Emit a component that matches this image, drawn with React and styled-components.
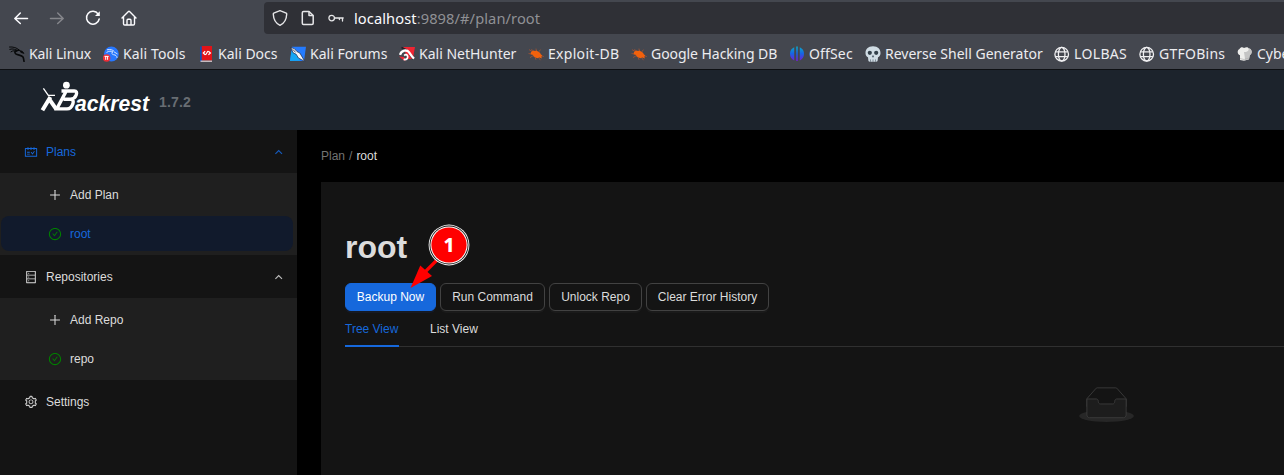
import React from "react";
import styled, { createGlobalStyle } from "styled-components";
import {
    AiOutlineCheckCircle,
    AiOutlineDatabase,
    AiOutlinePlus,
    AiOutlineSchedule,
    AiOutlineSetting,
} from "react-icons/ai";

const bookmarks = [
    { name: "Kali Linux", icon: DragonIcon, width: 94, spacing: -0.1 },
    { name: "Kali Tools", icon: ToolsIcon, width: 95, spacing: 0.12 },
    { name: "Kali Docs", icon: DocsIcon, width: 92 },
    { name: "Kali Forums", icon: ForumsIcon, width: 109 },
    { name: "Kali NetHunter", icon: NetHunterIcon, width: 129 },
    { name: "Exploit-DB", icon: BugIcon, width: 103, spacing: 0.3 },
    { name: "Google Hacking DB", icon: BugIcon, width: 158, spacing: -0.05 },
    { name: "OffSec", icon: OffSecIcon, width: 76, spacing: 0.15 },
    { name: "Reverse Shell Generator", icon: SkullIcon, width: 189 },
    { name: "LOLBAS", icon: GlobeIcon, width: 85, spacing: 0.35 },
    { name: "GTFOBins", icon: GlobeIcon, width: 98, spacing: 0.25 },
    { name: "CyberChef", icon: ChefIcon, width: 90 },
];

function App() {
    return (
        <>
            <GlobalStyle />
            <Window>
                <Browser />
                <Header>
                    <Logo />
                    <Version>1.7.2</Version>
                </Header>
                <Body>
                    <Sidebar />
                    <PlanView />
                </Body>
            </Window>
        </>
    );
}

function Browser() {
    return (
        <BrowserBar>
            <NavRow>
                <NavButtons>
                    <BackIcon />
                    <ForwardIcon />
                    <ReloadIcon />
                    <HomeIcon />
                </NavButtons>
                <UrlBar>
                    <ShieldIcon />
                    <PageIcon />
                    <KeyIcon />
                    <UrlText>
                        <strong>localhost</strong>:9898/#/plan/root
                    </UrlText>
                </UrlBar>
            </NavRow>
            <BookmarkRow>
                {bookmarks.map(({ name, icon: Icon, width, spacing }) => (
                    <Bookmark key={name} $width={width} $spacing={spacing}>
                        <Icon />
                        <span>{name}</span>
                    </Bookmark>
                ))}
            </BookmarkRow>
        </BrowserBar>
    );
}

function Sidebar() {
    return (
        <Sider>
            <MenuTitle $active>
                <AiOutlineSchedule />
                <span>Plans</span>
                <Arrow />
            </MenuTitle>
            <SubMenu>
                <MenuItem>
                    <AiOutlinePlus />
                    <span>Add Plan</span>
                </MenuItem>
                <MenuItem $active>
                    <AiOutlineCheckCircle color="#008000" />
                    <span>root</span>
                </MenuItem>
            </SubMenu>
            <MenuTitle>
                <AiOutlineDatabase />
                <span>Repositories</span>
                <Arrow />
            </MenuTitle>
            <SubMenu>
                <MenuItem>
                    <AiOutlinePlus />
                    <span>Add Repo</span>
                </MenuItem>
                <MenuItem>
                    <AiOutlineCheckCircle color="#008000" />
                    <span>repo</span>
                </MenuItem>
            </SubMenu>
            <MenuTitle>
                <AiOutlineSetting />
                <span>Settings</span>
            </MenuTitle>
        </Sider>
    );
}

function PlanView() {
    return (
        <Main>
            <Breadcrumb>
                <span>Plan</span>
                <span>/</span>
                <b>root</b>
            </Breadcrumb>
            <Panel>
                <TitleRow>
                    <Title>root</Title>
                    <Marker />
                </TitleRow>
                <ButtonRow>
                    <Button $primary $width={91}>Backup Now</Button>
                    <Button $width={105}>Run Command</Button>
                    <Button $width={93}>Unlock Repo</Button>
                    <Button $width={123}>Clear Error History</Button>
                </ButtonRow>
                <Tabs>
                    <Tab $active>Tree View</Tab>
                    <Tab>List View</Tab>
                </Tabs>
                <EmptyBox>
                    <EmptyIcon />
                </EmptyBox>
            </Panel>
        </Main>
    );
}

// browser icons

function BackIcon() {
    return (
        <svg width="16" height="16" fill="none" stroke="#fbfbfe" strokeWidth="1.5" strokeLinecap="round" strokeLinejoin="round">
            <path d="M14.5 8.5H2M7.3 3L1.8 8.5L7.3 13.5" />
        </svg>
    );
}

function ForwardIcon() {
    return (
        <svg width="16" height="16" fill="none" stroke="#85868b" strokeWidth="1.5" strokeLinecap="round" strokeLinejoin="round">
            <path d="M1.5 8.5H14M8.7 3L14.2 8.5L8.7 13.5" />
        </svg>
    );
}

function ReloadIcon() {
    return (
        <svg width="16" height="16" fill="none" stroke="#fbfbfe" strokeWidth="1.5" strokeLinecap="round">
            <path d="M13.2 4.1A6.4 6.4 0 1 0 14.2 9" />
            <path d="M14.8 1.2V6H10Z" fill="#fbfbfe" stroke="none" />
        </svg>
    );
}

function HomeIcon() {
    return (
        <svg width="16" height="16" fill="none" stroke="#fbfbfe" strokeWidth="1.4" strokeLinecap="round" strokeLinejoin="round">
            <path d="M1 8L7.2 1.7Q8 1 8.8 1.7L15 8M2.5 7V13.8Q2.5 15 3.7 15H12.3Q13.5 15 13.5 13.8V7" />
            <path d="M6 14.5V10.5Q6 9.3 7 9.3H9Q10 9.3 10 10.5V14.5" />
        </svg>
    );
}

function ShieldIcon() {
    return (
        <svg width="16" height="16" fill="none" stroke="#e6e6e8" strokeWidth="1.4" strokeLinejoin="round">
            <path d="M7.3 .9Q8 .5 8.7 .9L14.2 3.2Q14.8 3.5 14.7 4.2C14.5 9.5 12.3 13.2 8 15.3C3.7 13.2 1.5 9.5 1.3 4.2Q1.2 3.5 1.8 3.2Z" />
        </svg>
    );
}

function PageIcon() {
    return (
        <svg width="16" height="16" fill="none" stroke="#e6e6e8" strokeWidth="1.5" strokeLinejoin="round">
            <path d="M3.5 1.5H9L13.2 5.5V13.3Q13.2 14.5 12 14.5H3.5Q2.3 14.5 2.3 13.3V2.7Q2.3 1.5 3.5 1.5Z" />
            <path d="M9 1.5V5.5H13.2" />
        </svg>
    );
}

function KeyIcon() {
    return (
        <svg width="16" height="16" fill="none" stroke="#e6e6e8" strokeWidth="1.3" strokeLinecap="round">
            <circle cx="3.7" cy="8.1" r="2.8" />
            <path d="M6.7 8H15.2M14.5 8.2V11M11.4 8.2V9.6" />
        </svg>
    );
}

// bookmark icons

function DragonIcon() {
    return (
        <svg width="16" height="16" fill="none" stroke="#08090a" strokeLinecap="round">
            <path d="M.5 1C4 .6 8 1.8 10 3.8M.8 3.3C4 2.2 7 3.5 8.5 4.8M2 5.8C4 4.3 6 4.6 7.5 5.5" strokeWidth="1" />
            <path d="M10 4.2C6 4 5 6.2 6.8 7.8C9 9.5 12.5 8.8 14 11C14.6 12 14.8 14 15 15.3" strokeWidth="1.6" />
            <path d="M10 4.4L13.2 5.2L15 7.4L12 6.5" fill="#08090a" strokeWidth=".8" />
        </svg>
    );
}

function ToolsIcon() {
    return (
        <svg width="16" height="16">
            <circle cx="8.4" cy="8" r="7.4" fill="#2777ff" />
            <path d="M4 3.8C7 2.9 10 4 11 5.3M3.5 6.5C6 4.7 8 5 10 6C7.4 6.5 9 8.8 12 9C13.7 9.7 14 11 14 12M11 5.8L14.5 8" fill="none" stroke="#d3e4ff" strokeWidth="1" />
            <circle cx="3.6" cy="12" r="3.8" fill="#ed2e36" />
            <path d="M1.5 10.4H5.7M2.7 10.5V13.8M4.6 10.5V13.8" fill="none" stroke="#fff" strokeWidth="1" />
        </svg>
    );
}

function DocsIcon() {
    return (
        <svg width="16" height="16">
            <path d="M2 .5H4.2V15.3H2Z" fill="#124eb0" />
            <path d="M3.8 0H14V14.4H3.8Z" fill="#e11318" />
            <path d="M2.5 14.6H14V15.8H2.5Z" fill="#e6dadd" />
            <path d="M7.2 5.2L5.3 7L7.2 8.8M10.4 5.2L12.4 7L10.4 8.8M7.5 9L10 5" fill="none" stroke="#fff" strokeWidth="1.2" />
        </svg>
    );
}

function ForumsIcon() {
    return (
        <svg width="16" height="16">
            <path d="M2 .8H16L14 15H0Z" fill="#247bff" />
            <path d="M1.5 5L8 10L10 14.8L0 15Z" fill="#16a5f3" />
            <path d="M.8 1.5L4.3 2.6L7 5.6L9.8 7L14.8 15.4L8.4 12L6.2 8.3L3.2 6.8Z" fill="#f5f7fa" stroke="#1d2945" strokeWidth=".7" />
            <path d="M2.8 3.4L5.6 6.4" stroke="#273249" strokeWidth=".8" fill="none" />
        </svg>
    );
}

function NetHunterIcon() {
    return (
        <svg width="16" height="16">
            <path d="M4 1H16L13.8 13H9Z" fill="#ef2432" />
            <path d="M0 10.5L3 13L6.5 15.2L5 11Z" fill="#ef2432" />
            <path d="M2.5 1.5L8 4.2M11 9L14.5 13.5" stroke="#202027" strokeWidth="1.6" />
            <path d="M1 8.8C2.4 4.4 7.6 3 10.2 6.4C11.6 8.6 12.8 10.6 15 12.6" fill="none" stroke="#fff" strokeWidth="2.3" />
            <path d="M4.6 13.4C7.8 14 9.6 11.8 8.4 9.6C7.6 8.2 6.2 8.6 5.2 9.6" fill="none" stroke="#fff" strokeWidth="1.8" />
        </svg>
    );
}

function BugIcon() {
    return (
        <svg width="16" height="16">
            <path d="M1 3.6L5 6L3.6 3.2M.5 7.4L4 8.4M2 11.6L5.6 9.4M8.4 5.5L8 2.6M10.4 6.4L12.5 3.6M7 11L8 13.8M10.5 11.6L12.5 14.2M13 9.6L15.8 10.6" fill="none" stroke="#b3552f" strokeWidth=".7" />
            <path d="M3 6L5.2 4.6L7.2 5L8.4 4.4L12 6.8L12.8 8.2L14.2 9.4L13.4 10.6L13.8 12.4L11.4 11.6L9.2 12.2L5.6 10.6L5 9L2.6 8Z" fill="#f2610c" />
        </svg>
    );
}

function OffSecIcon() {
    return (
        <svg width="16" height="16" fill="url(#offsec)">
            <defs>
                <linearGradient id="offsec" x1="0" x2="0" y1="0" y2="15" gradientUnits="userSpaceOnUse">
                    <stop stopColor="#0ab0c4" />
                    <stop offset=".5" stopColor="#1765e5" />
                    <stop offset="1" stopColor="#741bd5" />
                </linearGradient>
            </defs>
            <path d="M5.2 1.3V14.4A7.2 7.2 0 0 1 5.2 1.3M10.8 1.3A7.2 7.2 0 0 1 10.8 14.4Z" />
            <path d="M7.2 .5H8.8V15H7.2Z" />
        </svg>
    );
}

function SkullIcon() {
    return (
        <svg width="16" height="16">
            <path d="M8 .2C3 .2 .4 3.1 .5 7.2C.6 9.5 1.5 10.5 3 11.2L3.4 14.7Q3.6 15.8 5 15.8H11Q12.4 15.8 12.6 14.7L13 11.2C14.5 10.5 15.4 9.5 15.5 7.2C15.6 3.1 13 .2 8 .2Z" fill="#d0dce4" />
            <circle cx="4.8" cy="6.8" r="2.1" fill="#323f49" />
            <circle cx="11.2" cy="6.8" r="2.1" fill="#323f49" />
            <path d="M8 9.4L7.2 11H8.8ZM5.5 13.4V15.8M8 13.4V15.8M10.5 13.4V15.8" fill="#4a5966" stroke="#4a5966" strokeWidth=".6" />
        </svg>
    );
}

function GlobeIcon() {
    return (
        <svg width="16" height="16" fill="none" stroke="#f0f0f2" strokeWidth="1.3">
            <circle cx="7.7" cy="8.2" r="6.8" />
            <ellipse cx="7.7" cy="8.2" rx="3.3" ry="6.8" />
            <path d="M1.5 5.8H13.9M1.5 10.6H13.9" />
        </svg>
    );
}

function ChefIcon() {
    return (
        <svg width="16" height="16">
            <path d="M3 14V9.3C.2 8.7-.2 4.3 2.5 3C3.4 1 5.8 1 7 2C9 .7 11 .9 11.8 2.4C15 2.3 15.8 7.8 12.7 9.2L12 13.2L7 14.8Z" fill="#eeeeec" />
            <path d="M7 6L8.2 14.2L12 13.2L12.7 9.2C15.8 7.8 15 2.3 11.8 2.4C12 5 9 6.4 7 6Z" fill="#c4c4c4" />
            <path d="M3 12.5L7 13.5L12 12" fill="none" stroke="#aaaaa9" strokeWidth=".6" />
        </svg>
    );
}

// app drawings

function Logo() {
    return (
        <LogoSvg width="110" height="34" viewBox="0 0 110 34">
            <circle cx="26.4" cy="5.2" r="3.4" />
            <g fill="none" stroke="#fff">
                <path d="M3.4 8.3L8.3 15.4H15" strokeWidth="1.3" />
                <path d="M10.4 17L2.4 30.3M9.4 19.4L16.4 29.4" strokeWidth="4" />
                <path d="M21.5 11H34.2Q37.6 11.2 36.2 15Q34.9 18.8 30.5 19.2H23.5M30.5 19.2Q34.4 20 32.8 24Q31.2 28.8 27 28.9H14.5M26 11.5L17 28.5" strokeWidth="3.4" />
            </g>
            <text x="35" y="30.5" textLength="74" lengthAdjust="spacingAndGlyphs">ackrest</text>
        </LogoSvg>
    );
}

function Arrow() {
    return (
        <ArrowSvg width="8" height="6" viewBox="0 0 8 6">
            <path d="M.4 4.8L3.7 1.5L7 4.8" fill="none" stroke="currentColor" strokeWidth="1.15" />
        </ArrowSvg>
    );
}

function Marker() {
    return (
        <MarkerSvg width="62" height="64" viewBox="0 0 62 64">
            <path d="M29.5 35.5L17 48" stroke="#f00" strokeWidth="3.2" />
            <path d="M2.5 64L12.3 41.5L24 52Z" fill="#f00" />
            <circle cx="41" cy="21" r="20.4" fill="#f5f5f5" />
            <circle cx="41" cy="21" r="19.5" fill="#171717" />
            <circle cx="41" cy="21" r="18.6" fill="#fff" />
            <circle cx="41" cy="21" r="17.6" fill="#f00" />
            <text x="41" y="28" textAnchor="middle">1</text>
        </MarkerSvg>
    );
}

function EmptyIcon() {
    return (
        <svg width="55" height="35" viewBox="0 0 64 41">
            <g transform="translate(0 1)" fill="none" fillRule="evenodd">
                <ellipse fill="#272727" cx="32" cy="33" rx="32" ry="7" />
                <g fillRule="nonzero" stroke="#3e3e3e">
                    <path d="M55 12.76L44.854 1.258C44.367.474 43.656 0 42.907 0H21.093c-.749 0-1.46.474-1.947 1.257L9 12.761V22h46v-9.24z" />
                    <path
                        d="M41.613 15.931c0-1.605.994-2.93 2.227-2.931H55v18.137C55 33.26 53.68 35 52.05 35h-40.1C10.32 35 9 33.259 9 31.137V13h11.16c1.233 0 2.227 1.323 2.227 2.928v.022c0 1.605 1.005 2.901 2.237 2.901h14.752c1.232 0 2.237-1.308 2.237-2.913v-.007z"
                        fill="#1d1d1d"
                    />
                </g>
            </g>
        </svg>
    );
}

const GlobalStyle = createGlobalStyle`
    * {
        box-sizing: border-box;
    }
    body {
        margin: 0;
        background-color: #000000;
    }
    svg {
        flex-shrink: 0;
    }
`;

const Window = styled.div`
    width: 100%;
    height: 475px;
    display: flex;
    flex-direction: column;
    overflow: hidden;
    font-family: "Liberation Sans", Arial, sans-serif;
    font-size: 12px;
    color: #dcdcdc;
`;

//browser

const BrowserBar = styled.div`
    height: 70px;
    flex-shrink: 0;
    overflow: hidden;
    background-color: #44474f;
    border-bottom: 1px solid #0e1013;
    font-family: "Noto Sans", sans-serif;
`;

const NavRow = styled.div`
    height: 36px;
    display: flex;
    align-items: center;
`;

const NavButtons = styled.div`
    width: 264px;
    padding-left: 13px;
    display: flex;
    align-items: center;
    gap: 20px;
`;

const UrlBar = styled.div`
    flex: 1;
    height: 32px;
    padding-left: 8px;
    display: flex;
    align-items: center;
    gap: 12px;
    background-color: #2f3036;
    border-radius: 4px 0 0 4px;
`;

const UrlText = styled.div`
    margin-left: -2px;
    font-size: 14.67px;
    letter-spacing: 0.08px;
    color: #8f9095;
    strong {
        font-weight: 400;
        color: #fbfbfe;
    }
`;

const BookmarkRow = styled.div`
    height: 33px;
    padding: 2px 0 0 9px;
    display: flex;
    align-items: center;
`;

const Bookmark = styled.div`
    width: ${(props) => props.$width}px;
    flex-shrink: 0;
    display: flex;
    align-items: center;
    gap: 4px;
    font-size: 14px;
    letter-spacing: ${(props) => props.$spacing || 0}px;
    color: #ececef;
    white-space: nowrap;
`;

//header

const Header = styled.div`
    height: 60px;
    flex-shrink: 0;
    padding-left: 40px;
    display: flex;
    align-items: center;
    background-color: #1c232c;
`;

const LogoSvg = styled.svg`
    margin-top: -6px;
    overflow: visible;
    fill: #ffffff;
    text {
        font-size: 22px;
        font-weight: bold;
        font-style: italic;
    }
`;

const Version = styled.span`
    margin: 4px 0 0 9px;
    font-size: 14px;
    letter-spacing: 0.15px;
    font-weight: bold;
    color: #686d73;
`;

const Body = styled.div`
    flex: 1;
    display: flex;
    overflow: hidden;
`;

//sidebar

const Sider = styled.div`
    width: 297px;
    flex-shrink: 0;
    background-color: #141414;
    svg {
        font-size: 14px;
    }
`;

const MenuTitle = styled.div`
    height: 43px;
    padding: 0 14px 0 24px;
    display: flex;
    align-items: center;
    gap: 8px;
    color: ${(props) => (props.$active ? "#1668dc" : "#dcdcdc")};
`;

const ArrowSvg = styled.svg`
    margin-left: auto;
    opacity: 0.85;
`;

const SubMenu = styled.div`
    height: 82px;
    padding: 4px 4px 4px 1px;
    display: flex;
    flex-direction: column;
    gap: 4px;
    background-color: #1f1f1f;
`;

const MenuItem = styled.div`
    height: 35px;
    padding-left: 47px;
    display: flex;
    align-items: center;
    gap: 8px;
    border-radius: 8px;
    color: ${(props) => (props.$active ? "#1668dc" : "#dcdcdc")};
    background-color: ${(props) => (props.$active ? "#111a2c" : "transparent")};
`;

//plan

const Main = styled.div`
    width: 1619px;
    flex-shrink: 0;
    padding: 0 24px;
    display: flex;
    flex-direction: column;
`;

const Breadcrumb = styled.div`
    height: 52px;
    display: flex;
    align-items: center;
    gap: 4px;
    color: #737373;
    b {
        font-weight: normal;
        color: #dcdcdc;
    }
`;

const Panel = styled.div`
    flex: 1;
    padding: 44px 24px 0;
    background-color: #141414;
`;

const TitleRow = styled.div`
    height: 57px;
    display: flex;
    align-items: flex-start;
`;

const Title = styled.h1`
    margin: 0;
    font-size: 32px;
    line-height: 42px;
    color: #dcdcdc;
`;

const MarkerSvg = styled.svg`
    position: relative;
    z-index: 1;
    margin: -2px 0 0 1px;
    text {
        font-family: "Noto Sans", sans-serif;
        font-size: 19px;
        font-weight: 800;
        fill: #ffffff;
    }
`;

const ButtonRow = styled.div`
    display: flex;
    gap: 4px;
`;

const Button = styled.button`
    width: ${(props) => props.$width}px;
    height: 28px;
    padding: 0;
    border: 1px solid ${(props) => (props.$primary ? "#1668dc" : "#424242")};
    border-radius: 6px;
    background-color: ${(props) => (props.$primary ? "#1668dc" : "#141414")};
    box-shadow: 0 2px 0 ${(props) => (props.$primary ? "#151a25" : "#1a1a1a")};
    font-family: inherit;
    font-size: 12px;
    color: ${(props) => (props.$primary ? "#ffffff" : "#dcdcdc")};
`;

const Tabs = styled.div`
    height: 36px;
    display: flex;
    gap: 31px;
    border-bottom: 1px solid #303030;
`;

const Tab = styled.div`
    min-width: 54px;
    height: 36px;
    line-height: 36px;
    color: ${(props) => (props.$active ? "#1668dc" : "#dcdcdc")};
    border-bottom: 2px solid
        ${(props) => (props.$active ? "#1668dc" : "transparent")};
`;

const EmptyBox = styled.div`
    padding-top: 40px;
    display: flex;
    justify-content: center;
`;

export default App;
